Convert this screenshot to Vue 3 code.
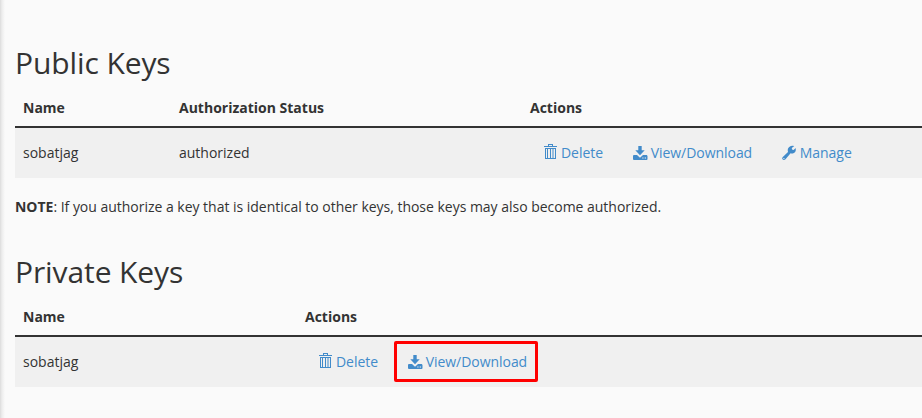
<template>
  <div class="page">
    <section class="key-section">
      <h2>Public Keys</h2>
      <table class="key-table public-table">
        <thead>
          <tr>
            <th class="col-name">Name</th>
            <th class="col-status">Authorization Status</th>
            <th>Actions</th>
          </tr>
        </thead>
        <tbody>
          <tr v-for="key in publicKeys" :key="key.name">
            <td>{{ key.name }}</td>
            <td>{{ key.status }}</td>
            <td>
              <div class="actions">
                <a v-for="action in key.actions" :key="action.label" class="btn-link">
                  <svg class="icon" :viewBox="icons[action.icon].box"><path :d="icons[action.icon].path" fill-rule="evenodd" /></svg>
                  <span>{{ action.label }}</span>
                </a>
              </div>
            </td>
          </tr>
        </tbody>
      </table>
      <p class="note"><strong>NOTE</strong>: If you authorize a key that is identical to other keys, those keys may also become authorized.</p>
    </section>

    <section class="key-section">
      <h2>Private Keys</h2>
      <table class="key-table private-table">
        <thead>
          <tr>
            <th class="col-name">Name</th>
            <th>Actions</th>
          </tr>
        </thead>
        <tbody>
          <tr v-for="key in privateKeys" :key="key.name">
            <td>{{ key.name }}</td>
            <td>
              <div class="actions">
                <a
                  v-for="action in key.actions"
                  :key="action.label"
                  :class="['btn-link', { highlighted: action.highlighted }]"
                >
                  <svg class="icon" :viewBox="icons[action.icon].box"><path :d="icons[action.icon].path" fill-rule="evenodd" /></svg>
                  <span>{{ action.label }}</span>
                </a>
              </div>
            </td>
          </tr>
        </tbody>
      </table>
    </section>
  </div>
</template>

<script setup>
import { ref } from 'vue';

const icons = {
    trash: {
        box: '0 1 14 14',
        path: 'M5 0H10V2H14V3H1V2H5ZM6 1V2H9V1ZM2 4H13V15H2ZM3 5V14H4V5ZM5 5V14H7V5ZM8 5V14H9.5V5ZM10.5 5V14H12V5Z'
    },
    download: {
        box: '0.5 0 14 14',
        path: 'M5.8 1H9.2V5.3H12.2L7.5 10.2L2.8 5.3H5.8ZM1 10H4.5L7.5 12.8L10.5 10H14.3L15 11V13.9Q15 15 14 15H1.5Q.5 15 .5 14V11ZM9.8 12.5V13.5H11V12.5ZM12.2 12.5V13.5H13.5V12.5Z'
    },
    wrench: {
        box: '0 0 14 14',
        path: 'M13.6 3Q14.5 6.6 11.9 8Q10 8.9 8.6 8.3L3.5 14.2Q2 15.5.7 14.5Q-.6 13.2.8 11.9L6 6.9Q5.1 3.7 7.2 2Q9.6.3 12.3 1.1L9.8 2.9L10 4.6L11.6 5ZM1.4 13V14H2.4V13Z'
    }
};

const publicKeys = ref([
    {
        name: 'sobatjag',
        status: 'authorized',
        actions: [
            { label: 'Delete', icon: 'trash' },
            { label: 'View/Download', icon: 'download' },
            { label: 'Manage', icon: 'wrench' }
        ]
    }
]);

const privateKeys = ref([
    {
        name: 'sobatjag',
        actions: [
            { label: 'Delete', icon: 'trash' },
            { label: 'View/Download', icon: 'download', highlighted: true }
        ]
    }
]);
</script>

<style>
body { background: #fafafa; }
</style>

<style scoped>
.page { box-sizing: border-box; height: 418px; padding: 46px 0 0 15px; overflow: hidden; background: linear-gradient(to right, #dcdcdc 0, #ededed 2px, #fafafa 5px); color: #333; font-family: "Open Sans", sans-serif; font-size: 14px; line-height: 20px; }
h2 { margin: 0 0 11px; font-size: 30px; font-weight: 400; line-height: 33px; letter-spacing: -0.1px; }

.key-table { width: 907px; table-layout: fixed; border-collapse: separate; border-spacing: 0; }
.key-table th, .key-table td { padding: 8px; text-align: left; }
.key-table th { border-bottom: 2px solid #333; font-weight: 700; }
.key-table td { background: #f0f0f0; }
.public-table .col-name { width: 140px; }
.public-table .col-status { width: 335px; }
.private-table .col-name { width: 266px; }

.actions { display: flex; gap: 3.6px; }
.btn-link { position: relative; display: flex; gap: 4px; padding: 7px 13px; color: #428bca; letter-spacing: -0.04px; white-space: nowrap; cursor: pointer; }
.icon { width: 14px; height: 14px; margin-top: 2px; fill: currentColor; overflow: visible; }

/* Recuadro rojo sobre la acción destacada */
.highlighted::after { content: ''; position: absolute; top: -4px; left: -0.4px; width: 138px; height: 35px; border: 3px solid #f00; border-radius: 2px; }

.note { margin: 19px 0 38px; letter-spacing: -0.02px; }
</style>
